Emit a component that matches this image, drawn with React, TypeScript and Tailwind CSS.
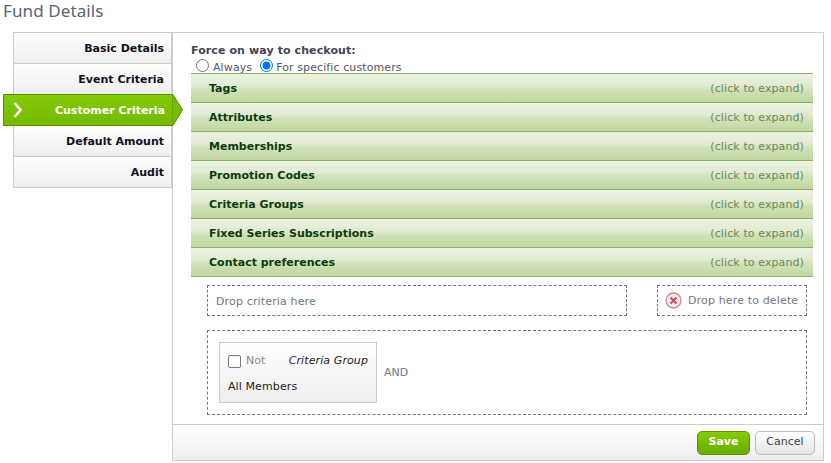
import React from 'react';

const tabs = ['Basic Details', 'Event Criteria', 'Customer Criteria', 'Default Amount', 'Audit'];
const sections = ['Tags', 'Attributes', 'Memberships', 'Promotion Codes', 'Criteria Groups', 'Fixed Series Subscriptions', 'Contact preferences'];

const App: React.FC = () => {
  return (
    <div className="w-[831px] h-[463px] overflow-hidden bg-white font-['DejaVu_Sans',sans-serif] text-[11px] text-[#444]">
      <h1 className="h-[32px] pl-[3px] pt-[1px] text-[17px] tracking-[0.1px] leading-[20px] text-[#566676] font-['Noto_Sans',sans-serif]">Fund Details</h1>
      <div className="flex">
        {/* Tabs */}
        <div className="w-[159px] ml-[13px] shrink-0">
          {tabs.map(tab =>
            tab === 'Customer Criteria' ? (
              <div key={tab} className="relative z-10 -ml-[10px] w-[169px] h-[32px] -mb-[1px] flex items-center justify-end pr-[7px] pt-[3px] bg-gradient-to-b from-[#84cb08] to-[#74b800] border border-[#5a9200] border-r-0 font-bold text-white">
                <svg className="absolute left-[8px] top-[7px] w-[12px] h-[16px]" viewBox="0 0 12 16">
                  <path d="M2.5 1 L8.5 8 L2.5 15" fill="none" stroke="white" strokeWidth="2.6" />
                </svg>
                {tab}
                <svg className="absolute left-[168px] -top-[1px] w-[11px] h-[32px]" viewBox="0 0 11 32">
                  <path d="M0 0.5 L1 0.5 L10.5 16 L1 31.5 L0 31.5 Z" fill="#78bc02" stroke="#5a9200" strokeWidth="1" />
                </svg>
              </div>
            ) : (
              <div key={tab} className="h-[31px] flex items-center justify-end pr-[7px] pt-[2px] bg-gradient-to-b from-white to-[#eeeeee] border border-[#cccccc] border-b-0 last:h-[32px] last:border-b font-bold text-[#111122]">
                {tab}
              </div>
            )
          )}
        </div>

        {/* Panel */}
        <div className="w-[652px] h-[429px] border border-[#cccccc] flex flex-col">
          <div className="flex-1 pl-[18px] pr-[10px] pt-[11px]">
            <div className="font-bold tracking-[0.1px] leading-[14px] text-[#444455]">Force on way to checkout:</div>
            <div className="flex items-center h-[15px] pl-[5px] leading-[15px] tracking-[0.1px] text-[#555566]">
              <input type="radio" name="force" className="w-[13px] h-[13px] m-0" />
              <span className="ml-[4px] mt-[4px]">Always</span>
              <input type="radio" name="force" defaultChecked className="w-[13px] h-[13px] m-0 ml-[8px]" />
              <span className="ml-[3px] mt-[4px]">For specific customers</span>
            </div>

            <div className="border-t border-[#8fb060]">
              {sections.map(section => (
                <div
                  key={section}
                  className="h-[29px] flex items-center justify-between pl-[18px] pr-[9px] pt-[3px] border-b border-[#8fb060] bg-[linear-gradient(to_bottom,#ecf3e4_0%,#e0ebd1_42%,#cfe1b6_58%,#c0d7a0_100%)]"
                >
                  <span className="font-bold text-[#0e3b0e]">{section}</span>
                  <span className="tracking-[0.1px] text-[#6c8a5c]">(click to expand)</span>
                </div>
              ))}
            </div>

            <div className="flex justify-between pl-[16px] pr-[6px] mt-[8px] tracking-[0.15px]">
              <div className="w-[420px] h-[31px] border border-dashed border-[#777] flex items-center pl-[8px] pt-[3px] text-[#777]">Drop criteria here</div>
              <div className="w-[150px] h-[31px] border border-dashed border-[#777] flex items-center pl-[7px] text-[#777788]">
                <svg className="w-[17px] h-[17px] mr-[6px] shrink-0 -mt-[1px]" viewBox="0 0 17 17">
                  <circle cx="8.5" cy="8.5" r="7.5" fill="#fbeaea" stroke="#cf8a8e" strokeWidth="1.3" />
                  <path d="M5.5 5.5 L11.5 11.5 M11.5 5.5 L5.5 11.5" stroke="#c0545c" strokeWidth="2.2" />
                </svg>
                <span className="mt-[2px]">Drop here to delete</span>
              </div>
            </div>

            <div className="ml-[16px] mr-[6px] mt-[14px] h-[85px] border border-dashed border-[#777] flex items-center pl-[11px]">
              <div className="w-[158px] h-[61px] border border-[#cccccc] bg-gradient-to-b from-white to-[#eeeeee] px-[8px] pt-[10px]">
                <div className="flex items-center h-[16px]">
                  <span className="w-[13px] h-[13px] rounded-[2px] border border-[#777] bg-white shrink-0" />
                  <span className="ml-[5px] mt-[1px] text-[#888]">Not</span>
                  <span className="ml-auto mt-[1px] italic tracking-[0.1px] text-[#222]">Criteria Group</span>
                </div>
                <div className="mt-[11px] tracking-[0.1px] text-[#222] leading-[14px]">All Members</div>
              </div>
              <span className="ml-[7px] mt-[2px] text-[#777]">AND</span>
            </div>
          </div>

          {/* Footer */}
          <div className="h-[36px] border-t border-[#cccccc] bg-gradient-to-b from-white to-[#eeeeee] flex items-center justify-end gap-[5px] pr-[8px]">
            <button className="w-[53px] h-[24px] rounded-[5px] border border-[#5a9200] bg-gradient-to-b from-[#84cb08] to-[#69aa00] font-bold text-white">Save</button>
            <button className="w-[60px] h-[24px] rounded-[5px] border border-[#bbbbbb] bg-gradient-to-b from-white to-[#e4e4e4] text-[#444]">Cancel</button>
          </div>
        </div>
      </div>
    </div>
  );
};

export default App;
